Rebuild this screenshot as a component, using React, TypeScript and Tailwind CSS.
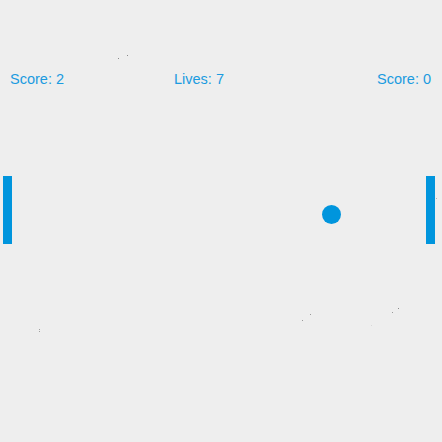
const specks: { x: number; y: number; c: string }[] = [
  { x: 118, y: 58, c: "#8a8a8a" },
  { x: 127, y: 55, c: "#8a8a8a" },
  { x: 436, y: 198, c: "#b5b5b5" },
  { x: 310, y: 314, c: "#9a9a9a" },
  { x: 302, y: 320, c: "#9a9a9a" },
  { x: 398, y: 308, c: "#8a8a8a" },
  { x: 392, y: 312, c: "#9a9a9a" },
  { x: 371, y: 325, c: "#d8d8d8" },
  { x: 39, y: 329, c: "#a0a0a0" },
  { x: 39, y: 331, c: "#a0a0a0" },
];

const Paddle = () => <div className="w-[9px] h-[68px] bg-[#0095dd]" />;

export default function App() {
  return (
    <div className="relative w-[442px] h-[442px] overflow-hidden bg-[#eeeeee] font-['Liberation_Sans',Arial,sans-serif]">
      {/* hud */}
      <div className="flex items-start pt-[70px] pl-[10px] pr-[11px] text-[14.5px] leading-[18px] text-[#1b9be0]">
        <span className="w-[164px]">Score: 2</span>
        <span>Lives: 7</span>
        <span className="ml-auto">Score: 0</span>
      </div>

      {/* paddles */}
      <div className="mt-[88px] flex justify-between pl-[3px] pr-[7px]">
        <Paddle />
        <Paddle />
      </div>

      {/* ball */}
      <div className="absolute left-[322px] top-[205px] size-[19px] rounded-full bg-[#0095dd]" />

      {specks.map((s, i) => (
        <div
          key={i}
          className="absolute w-px h-px"
          style={{ left: s.x, top: s.y, backgroundColor: s.c }}
        />
      ))}
    </div>
  );
}
